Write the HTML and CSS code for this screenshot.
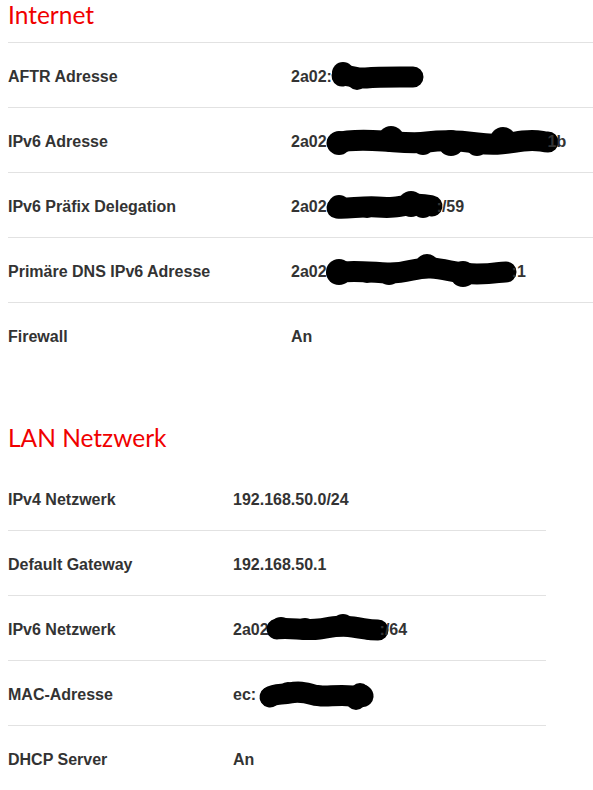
FILE: index.html
```html
<!DOCTYPE html>
<html lang="de">
<head>
<meta charset="utf-8">
<title>Status</title>
<link rel="stylesheet" href="styles.css">
</head>
<body>
<div class="page">
  <section class="section internet">
    <h2 class="section-title">Internet</h2>
    <div class="rows">
      <div class="row"><div class="label">AFTR Adresse</div><div class="value">2a02:<span class="redact w86"><svg viewBox="0 0 86 16" width="86" height="16"><path d="M10,7 C16,5 24,10 34,9 S56,8 68,8 S78,8 81,8" /><circle cx="11" cy="4" r="11"/><circle cx="25" cy="11" r="10"/></svg></span></div></div>
      <div class="row"><div class="label">IPv6 Adresse</div><div class="value">2a02<span class="redact w221"><svg viewBox="0 0 221 16" width="221" height="16"><path d="M10,9 C20,6 40,6 56,7 S86,10 100,8 S130,6 150,9 S180,9 196,7 S214,8 221,8" /><circle cx="12" cy="9" r="12"/><circle cx="64" cy="5" r="13"/><circle cx="124" cy="9" r="13"/><circle cx="176" cy="6" r="13"/><circle cx="150" cy="11" r="11"/><circle cx="96" cy="10" r="11"/></svg></span>1b</div></div>
      <div class="row"><div class="label">IPv6 Präfix Delegation</div><div class="value">2a02<span class="redact w110"><svg viewBox="0 0 110 16" width="110" height="16"><path d="M10,9 C20,10 36,7 50,8 S70,8 82,6 S100,6 105,7" /><circle cx="12" cy="7" r="11"/><circle cx="84" cy="5" r="13"/><circle cx="96" cy="8" r="11"/><circle cx="40" cy="9" r="10"/></svg></span>:/59</div></div>
      <div class="row"><div class="label">Primäre DNS IPv6 Adresse</div><div class="value">2a02<span class="redact w185"><svg viewBox="0 0 185 16" width="185" height="16"><path d="M10,9 C22,6 40,8 60,9 S88,3 104,4 S130,10 150,10 S170,8 179,8" /><circle cx="12" cy="8" r="13"/><circle cx="100" cy="2" r="12"/><circle cx="136" cy="10" r="13"/><circle cx="62" cy="10" r="11"/><circle cx="40" cy="9" r="10"/></svg></span>:1</div></div>
      <div class="row last"><div class="label">Firewall</div><div class="value">An</div></div>
    </div>
  </section>

  <section class="section lan">
    <h2 class="section-title">LAN Netzwerk</h2>
    <div class="rows">
      <div class="row"><div class="label">IPv4 Netzwerk</div><div class="value">192.168.50.0/24</div></div>
      <div class="row"><div class="label">Default Gateway</div><div class="value">192.168.50.1</div></div>
      <div class="row"><div class="label">IPv6 Netzwerk</div><div class="value">2a02<span class="redact w111"><svg viewBox="0 0 111 16" width="111" height="16"><path d="M8,7 C20,5 36,9 50,7 S70,3 84,5 S100,8 109,8" /><circle cx="12" cy="6" r="11"/><circle cx="36" cy="7" r="11"/><circle cx="74" cy="3" r="11"/><circle cx="100" cy="8" r="10"/></svg></span>:/64</div></div>
      <div class="row"><div class="label">MAC-Adresse</div><div class="value">ec:<span class="redact w112"><svg viewBox="0 0 112 16" width="112" height="16"><path d="M14,10 C20,6 26,8 34,6 S48,5 58,8 S80,7 96,9 S106,8 106,8" /><circle cx="14" cy="10" r="10"/><circle cx="32" cy="5" r="10"/><circle cx="62" cy="8" r="10"/><circle cx="104" cy="6" r="10"/><circle cx="100" cy="13" r="10"/></svg></span></div></div>
      <div class="row last"><div class="label">DHCP Server</div><div class="value">An</div></div>
    </div>
  </section>
</div>
</body>
</html>
```

FILE: styles.css
```css
html, body {
  margin: 0;
  padding: 0;
  background: #ffffff;
}

.page {
  padding: 0 0 0 8px;
  font-family: "Liberation Sans", Arial, sans-serif;
  color: #333333;
}

.section-title {
  margin: 0;
  font-family: Lato, "Open Sans", sans-serif;
  font-weight: 400;
  font-size: 24.5px;
  line-height: 30px;
  color: #f00000;
  padding-bottom: 12px;
  border-bottom: 1px solid #e2e2e2;
}

.lan {
  margin-top: 56px;
  width: 538px;
}

.lan .section-title {
  border-bottom-color: transparent;
}

.row {
  display: grid;
  height: 64px;
  box-sizing: content-box;
  align-items: center;
  border-bottom: 1px solid #e2e2e2;
  font-size: 16px;
  font-weight: 700;
}

.label,
.value {
  padding-top: 3px;
}

.row.last {
  border-bottom: none;
}

.internet .row {
  grid-template-columns: 283px 1fr;
}

.lan .row {
  grid-template-columns: 225px 1fr;
}

.value {
  white-space: nowrap;
}

.redact {
  display: inline-block;
  height: 16px;
  vertical-align: -3px;
}

.redact svg {
  display: block;
  overflow: visible;
  fill: #000000;
  stroke: #000000;
  stroke-width: 21;
  stroke-linecap: round;
  stroke-linejoin: round;
}

.redact svg circle {
  stroke: none;
}

.w86 { width: 86px; }
.w221 { width: 221px; }
.w110 { width: 110px; }
.w185 { width: 185px; }
.w111 { width: 111px; }
.w112 { width: 112px; }
```
